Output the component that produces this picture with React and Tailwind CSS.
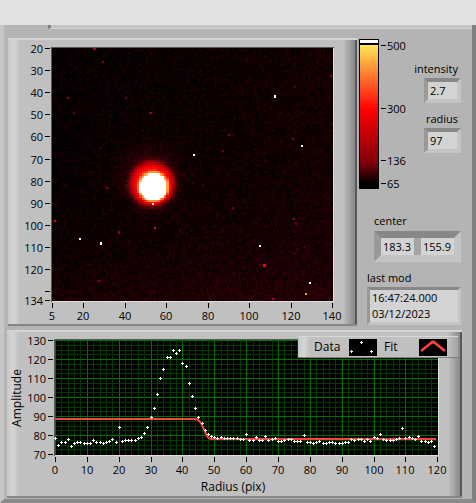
import React from "react";

const FONT = "font-['Open_Sans','Noto_Sans',sans-serif]";

/* ---------- star image ---------- */
const IMG = { x: 52, y: 48, w: 281, h: 253, cols: 135, rows: 115 };

// Colour ramp: 65 black, 136 dark red, 300 red, 500 yellow, above is white.
const STOPS = [
  [65, [0, 0, 0]],
  [136, [128, 0, 12]],
  [300, [255, 0, 0]],
  [500, [255, 232, 88]],
];

function ramp(v) {
  if (v > 500) return "rgb(255,255,255)";
  for (let i = 1; i < STOPS.length; i++) {
    const [v1, c1] = STOPS[i];
    if (v <= v1) {
      const [v0, c0] = STOPS[i - 1];
      const t = Math.max(0, (v - v0) / (v1 - v0));
      return `rgb(${c0.map((c, k) => Math.round(c + (c1[k] - c) * t)).join(",")})`;
    }
  }
  return "rgb(255,232,88)";
}

function buildStar() {
  let seed = 12345;
  const rnd = () => {
    seed = (seed * 1664525 + 1013904223) >>> 0;
    return seed / 4294967296;
  };
  const cw = IMG.w / IMG.cols;
  const ch = IMG.h / IMG.rows;
  const groups = {};
  for (let r = 0; r < IMG.rows; r++) {
    for (let c = 0; c < IMG.cols; c++) {
      const x0 = Math.round(IMG.x + c * cw);
      const x1 = Math.round(IMG.x + (c + 1) * cw);
      const y0 = Math.round(IMG.y + r * ch);
      const y1 = Math.round(IMG.y + (r + 1) * ch);
      const px = (x0 + x1) / 2;
      const py = (y0 + y1) / 2;
      const base = 67 + 7 * (c / IMG.cols) + 10 * Math.pow(r / IMG.rows, 4);
      let v = base + (rnd() + rnd() - 0.9) * 11;
      if (rnd() < 0.003) v += 22;
      const d = Math.hypot(px - 153.5, py - 187);
      const halo = Math.hypot(px - 152, py - 184);
      if (d < 14) v = 600;
      else {
        v += 215 / (1 + Math.exp((halo - 21) / 1.7));
        v += 150 * Math.exp(-Math.pow((d - 14) / 2.4, 2));
        v += 28 * Math.exp(-Math.pow(Math.hypot(px - 148, py - 176) / 26, 2));
        v = Math.min(v, 480);
      }
      const q = v > 500 ? 501 : v > 150 ? Math.round(v / 10) * 10 : Math.round(v / 2) * 2;
      const key = ramp(q);
      groups[key] = (groups[key] || "") + `M${x0} ${y0}H${x1}V${y1}H${x0}Z`;
    }
  }
  return Object.entries(groups);
}

const STAR = buildStar();

const HOT_PIXELS = [
  [274, 95, 2, 3, "#fff"], [301, 145, 2, 2, "#fff"], [193, 154, 2, 2, "#fff"],
  [79, 238, 2, 2, "#fff"], [100, 242, 2, 3, "#fff"], [259, 245, 2, 2, "#fff"],
  [309, 282, 2, 2, "#fff"], [152, 203, 2, 2, "#fff"], [305, 293, 2, 2, "#ffa040"],
  [263, 264, 3, 3, "#ff0000"], [154, 227, 2, 2, "#e00010"], [54, 220, 2, 2, "#e00010"],
  [272, 298, 2, 2, "#d00010"], [118, 231, 2, 3, "#a00010"], [98, 280, 2, 2, "#a00010"],
  [106, 187, 2, 2, "#900010"], [93, 48, 3, 2, "#b00010"], [102, 61, 2, 2, "#900010"],
  [67, 97, 2, 2, "#a00010"], [125, 97, 2, 2, "#800010"], [149, 112, 3, 2, "#a00010"],
  [73, 112, 2, 2, "#700010"], [330, 75, 2, 2, "#a00010"], [228, 134, 2, 2, "#900010"],
  [222, 150, 2, 2, "#700010"], [293, 218, 2, 2, "#900010"], [295, 222, 2, 3, "#700010"],
  [232, 207, 2, 2, "#800010"], [292, 138, 2, 2, "#900010"],
];

const IMG_Y = [[20, 48], [30, 70], [40, 92], [50, 114], [60, 136], [70, 159], [80, 181], [90, 203], [100, 225], [110, 247], [120, 269], [134, 300]];
const IMG_X = [[5, 52], [20, 83], [40, 125], [60, 166], [80, 208], [100, 249], [120, 291], [140, 332]];

function StarImage() {
  return (
    <svg viewBox="20 40 323 284" className="block w-full" role="img" aria-label="star image">
      <g shapeRendering="crispEdges">
        <rect x="51" y="47" width="283" height="255" fill="#4f5a50" />
        <rect x="52" y="48" width="282" height="254" fill="#dedede" />
        <rect x="52" y="48" width="281" height="253" fill="#000" />
        {STAR.map(([fill, d]) => <path key={fill} d={d} fill={fill} />)}
        {HOT_PIXELS.map(([x, y, w, h, f]) => <rect key={`${x}-${y}`} x={x} y={y} width={w} height={h} fill={f} />)}
        {IMG_Y.map(([n, y]) => <rect key={n} x="45" y={y} width="5" height="1" fill="#000" />)}
        <rect x="45" y="291" width="5" height="1" fill="#000" />
        {IMG_X.map(([n, x]) => <rect key={n} x={x} y="303" width="1" height="5" fill="#000" />)}
      </g>
      <g className="text-[11px]" fill="#000">
        {IMG_Y.map(([n, y]) => <text key={n} x="43" y={y + 5} textAnchor="end">{n}</text>)}
        {IMG_X.map(([n, x]) => <text key={n} x={x} y="320" textAnchor="middle">{n}</text>)}
      </g>
    </svg>
  );
}

/* ---------- colour scale ---------- */
function ColourScale() {
  return (
    <svg viewBox="359 38 50 156" width="50" height="156" className="block shrink-0" role="img" aria-label="colour scale">
      <defs>
        <linearGradient id="ramp" x1="0" y1="0" x2="0" y2="1">
          <stop offset="0" stopColor="#ffe858" />
          <stop offset="0.45" stopColor="#ff0000" />
          <stop offset="0.82" stopColor="#80000c" />
          <stop offset="0.97" stopColor="#000" />
        </linearGradient>
      </defs>
      <g shapeRendering="crispEdges">
        <rect x="359" y="39" width="20" height="150" fill="#000" />
        <rect x="360" y="40" width="18" height="3" fill="#fff" />
        <rect x="360" y="45" width="18" height="143" fill="url(#ramp)" />
        {[45, 108, 160, 183].map((y) => <rect key={y} x="381" y={y} width="5" height="1" fill="#000" />)}
      </g>
      <g className="text-[11px]" fill="#000">
        {[[500, 45], [300, 108], [136, 160], [65, 183]].map(([n, y]) => <text key={n} x="387" y={y + 5}>{n}</text>)}
      </g>
    </svg>
  );
}

/* ---------- radial profile ---------- */
// One sample per pixel of radius, in thirds of a pixel below y = 320.
const SAMPLES = [
  355, 376, 367, 367, 358, 379, 370, 367, 367, 370, 370, 370, 361, 367, 367, 370, 367, 364, 358, 367,
  322, 364, 361, 361, 361, 361, 355, 352, 340, 322, 292, 265, 223, 175, 148, 112, 112, 91, 100, 91,
  130, 139, 190, 229, 265, 292, 310, 331, 343, 349, 352, 355, 352, 355, 355, 355, 355, 355, 358, 358,
  343, 361, 361, 352, 361, 361, 349, 361, 358, 355, 364, 364, 361, 358, 358, 364, 364, 364, 346, 367,
  367, 370, 367, 364, 370, 370, 367, 367, 370, 370, 370, 367, 367, 358, 361, 358, 358, 364, 358, 364,
  352, 355, 343, 358, 361, 361, 361, 358, 355, 325, 355, 352, 355, 358, 349, 364, 364, 367, 364, 379,
];

const px = (r) => Math.round(55 + r * 3.186);
const range = (n) => Array.from({ length: n }, (_, i) => i);

function Plus({ x, y }) {
  return <path d={`M${x - 1} ${y}h3v1h-3zM${x} ${y - 1}h1v3h-1z`} fill="#fff" />;
}

function Profile() {
  return (
    <svg viewBox="19 332 429 164" className="block w-full overflow-visible" role="img" aria-label="radial profile">
      <g shapeRendering="crispEdges">
        <rect x="54" y="339" width="385" height="117" fill="#4f5a50" />
        <rect x="55" y="340" width="384" height="116" fill="#dedede" />
        <rect x="55" y="340" width="383" height="115" fill="#000" />
        {range(60).map((i) => <rect key={i} x={px(i * 2)} y="340" width="1" height="115" fill="#003a00" />)}
        {range(24).map((i) => <rect key={i} x="55" y={Math.round(340 + i * 4.75)} width="383" height="1" fill="#003a00" />)}
        {range(12).map((i) => <rect key={i} x={px(i * 10)} y="340" width="1" height="115" fill="#007000" />)}
        {range(6).map((i) => <rect key={i} x="55" y={340 + i * 19} width="383" height="1" fill="#007000" />)}
      </g>
      <path d="M55 419H195C204 419 204 439 211 439H436" fill="none" stroke="#ff4040" strokeWidth="2" />
      <g shapeRendering="crispEdges">
        {SAMPLES.map((s, i) => <Plus key={i} x={px(i)} y={320 + Math.floor(s / 3)} />)}
        {range(7).map((i) => <rect key={i} x="48" y={340 + i * 19} width="5" height="1" fill="#000" />)}
        {range(13).map((i) => <rect key={i} x={px(i * 10)} y="457" width="1" height="5" fill="#000" />)}
      </g>
      <g className="text-[11px]" fill="#000">
        {range(7).map((i) => <text key={i} x="46" y={345 + i * 19} textAnchor="end">{130 - i * 10}</text>)}
        {range(13).map((i) => <text key={i} x={px(i * 10)} y="474" textAnchor="middle">{i * 10}</text>)}
      </g>
      <g className="text-[12px]" fill="#000">
        <text x="233" y="491" textAnchor="middle">Radius (pix)</text>
        <text x="21" y="398" textAnchor="middle" transform="rotate(-90 21 398)">Amplitude</text>
      </g>
    </svg>
  );
}

function Legend() {
  return (
    <div className="absolute right-1 top-[4px] flex h-[22px] w-[160px] items-center border-b border-t border-b-[#808080] border-t-[#d8d8d8] bg-[#c0c0c0]">
      <div className="h-full w-3 bg-gradient-to-r from-[#c8c8c8] via-[#d6d6d6] to-[#c0c0c0]" />
      <span className="w-[39px] pl-1">Data</span>
      <svg viewBox="0 0 28 17" width="28" height="17" className="bg-black" shapeRendering="crispEdges">
        <Plus x={2} y={12} /><Plus x={12} y={3} /><Plus x={22} y={12} />
      </svg>
      <span className="w-[42px] pl-[7px]">Fit</span>
      <svg viewBox="0 0 28 17" width="28" height="17" className="bg-black">
        <path d="M2 12L12 4Q14 2 16 4L26 12" fill="none" stroke="#ff4040" strokeWidth="2.6" />
      </svg>
      <div className="h-full flex-1 bg-gradient-to-r from-[#c0c0c0] to-[#a4a4a4]" />
    </div>
  );
}

/* ---------- panels and readouts ---------- */
function Panel({ children, className = "" }) {
  return (
    <section className={`relative flex border-b-2 border-t-2 border-b-[#858585] border-t-[#d4d4d4] bg-[#c0c0c0] ${className}`}>
      <div className="w-3 shrink-0 bg-gradient-to-r from-[#c8c8c8] via-[#d6d6d6] to-[#c0c0c0]" />
      <div className="min-w-0 flex-1">{children}</div>
      <div className="w-[14px] shrink-0 border-r-2 border-r-[#585858] bg-gradient-to-r from-[#c0c0c0] to-[#888888]" />
    </section>
  );
}

const SUNK = "border-b-[#c4c4c4] border-l-[#999999] border-r-[#c4c4c4] border-t-[#888888]";

function Readout({ id, label, value }) {
  return (
    <div className="flex flex-col items-end">
      <label htmlFor={id} className="h-4 pr-[3px] leading-4">{label}</label>
      <input id={id} readOnly defaultValue={value} className={`mt-px h-[25px] w-[37px] border-4 bg-[#d3d3d3] pl-[2px] outline-none ${SUNK}`} />
    </div>
  );
}

export default function App() {
  return (
    <div className={`flex min-h-screen flex-col bg-[#b4b4b4] text-[12px] leading-4 text-black ${FONT}`}>
      <header className="h-[25px] bg-[#e1e1e1]" />
      <main className="flex flex-1 flex-col border-b-4 border-l-4 border-r-4 border-b-[#8a8a8a] border-l-[#c6c6c6] border-r-[#808080]">
        <div className="ml-11 h-1 border-b border-l-[3px] border-b-[#cfcfcf] border-l-[#808080] bg-[#c4c4c4]" />
        <div className="flex pl-1 pr-[11px] pt-[9px]">
          <Panel className="min-w-0 flex-1"><StarImage /></Panel>
          <aside className="flex w-[104px] shrink-0 flex-col pl-[2px] text-[11px]">
            <div className="flex">
              <ColourScale />
              <div className="flex flex-1 flex-col items-end gap-2 pt-[23px]">
                <Readout id="intensity" label="intensity" value="2.7" />
                <Readout id="radius" label="radius" value="97" />
              </div>
            </div>
            <fieldset className="mt-[19px] pl-[15px]">
              <legend className="h-[18px]">center</legend>
              <div className={`flex h-[31px] gap-[7px] border-[7px] bg-[#a4a4a4] ${SUNK}`}>
                <input aria-label="center x" readOnly defaultValue="183.3" className="w-0 flex-1 bg-[#d3d3d3] pl-[2px] outline-none" />
                <input aria-label="center y" readOnly defaultValue="155.9" className="w-0 flex-1 bg-[#d3d3d3] pl-[2px] outline-none" />
              </div>
            </fieldset>
            <div className="flex flex-col pl-2 pt-2">
              <label htmlFor="lastmod" className="h-[17px]">last mod</label>
              <textarea id="lastmod" readOnly rows={2} defaultValue={"16:47:24.000\n03/12/2023"} className={`h-[38px] resize-none overflow-hidden border-[3px] bg-[#d3d3d3] pl-[2px] outline-none ${SUNK}`} />
            </div>
          </aside>
        </div>
        <div className="pl-[3px] pr-[10px] pt-1">
          <Panel>
            <Profile />
            <Legend />
          </Panel>
        </div>
      </main>
    </div>
  );
}
